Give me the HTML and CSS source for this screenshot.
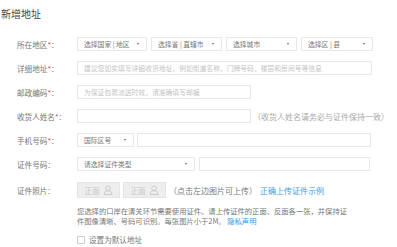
FILE: index.html
```html
<!DOCTYPE html>
<html>
	<head>
		<meta charset="utf-8">
		<link rel="stylesheet" href="styles.css">
	</head>
	<body>
		<div class="container">
			<h1>新增地址</h1>
			<form>
				<div class="row">
					<label class="label">所在地区<i>*</i>：</label>
					<div class="select w70">选择国家 | 地区<span class="arrow"></span></div>
					<div class="select w71">选择省 | 直辖市<span class="arrow"></span></div>
					<div class="select w71">选择城市<span class="arrow"></span></div>
					<div class="select w72">选择区 | 县<span class="arrow"></span></div>
				</div>
				<div class="row">
					<label class="label">详细地址<i>*</i>：</label>
					<div class="input w295 placeholder">建议您如实填写详细收货地址，例如街道名称，门牌号码，楼层和房间号等信息</div>
				</div>
				<div class="row">
					<label class="label">邮政编码<i>*</i>：</label>
					<div class="input w174 placeholder">为保证包裹派送时效，请准确填写邮编</div>
				</div>
				<div class="row">
					<label class="label">收货人姓名<i>*</i>：</label>
					<div class="input w174"></div>
					<span class="hint">（收货人姓名请务必与证件保持一致）</span>
				</div>
				<div class="row">
					<label class="label">手机号码<i>*</i>：</label>
					<div class="select w57">国际区号<span class="arrow"></span></div>
					<div class="input w234"></div>
				</div>
				<div class="row">
					<label class="label">证件号码：</label>
					<div class="select w118">请选择证件类型<span class="arrow"></span></div>
					<div class="input w171"></div>
				</div>
				<div class="row row-photo">
					<label class="label">证件照片：</label>
					<div class="photo">正面
						<svg width="10" height="10" viewBox="0 0 10 10"><circle cx="5" cy="3.2" r="2.3" fill="none" stroke="#c6c6c6" stroke-width="0.9"/><path d="M1 9.5 C1 6.8 3 5.8 5 5.8 C7 5.8 9 6.8 9 9.5 Z" fill="none" stroke="#c6c6c6" stroke-width="0.9"/></svg>
					</div>
					<div class="photo">正面
						<svg width="10" height="10" viewBox="0 0 10 10"><circle cx="5" cy="3.2" r="2.3" fill="none" stroke="#c6c6c6" stroke-width="0.9"/><path d="M1 9.5 C1 6.8 3 5.8 5 5.8 C7 5.8 9 6.8 9 9.5 Z" fill="none" stroke="#c6c6c6" stroke-width="0.9"/></svg>
					</div>
					<span class="tip">（点击左边图片可上传）</span>
					<a class="link">正确上传证件示例</a>
				</div>
				<p class="notice">您选择的口岸在清关环节需要使用证件。请上传证件的正面、反面各一张，并保持证<br>件图像清晰、号码可识别。每张图片小于2M。 <a class="link">隐私声明</a></p>
				<div class="default">
					<span class="checkbox"></span>设置为默认地址
				</div>
			</form>
		</div>
	</body>
</html>
```

FILE: styles.css
```css
body {
	margin: 0;
	background: #fff;
	font-family: "Noto Sans CJK SC", "Noto Sans", sans-serif;
	color: #777;
}
.container {
	width: 397px;
	padding-left: 1px;
}
h1 {
	margin: 7px 0 0;
	font-size: 10px;
	line-height: 14px;
	font-weight: 400;
	color: #444;
}
form {
	margin-top: 16px;
}
.row {
	display: flex;
	align-items: center;
	height: 14px;
	margin-bottom: 10px;
	padding-left: 16px;
}
.label {
	width: 60px;
	flex: none;
	font-size: 7.6px;
	color: #777;
	white-space: nowrap;
}
.label i {
	font-style: normal;
	color: #e4393c;
}
.select, .input {
	box-sizing: border-box;
	height: 14px;
	border: 1px solid #e8e8e8;
	background: #fff;
	font-size: 6.8px;
	line-height: 12px;
	color: #777;
	padding: 0 6px;
	white-space: nowrap;
	overflow: hidden;
	flex: none;
	margin-right: 4px;
}
.select {
	position: relative;
}
.arrow {
	position: absolute;
	right: 7px;
	top: 5px;
	border-left: 1.5px solid transparent;
	border-right: 1.5px solid transparent;
	border-top: 2px solid #666;
}
.placeholder {
	color: #c4c4c4;
}
.w70 { width: 70px; }
.w71 { width: 71px; }
.w72 { width: 72px; }
.w295 { width: 295px; }
.w174 { width: 174px; }
.w57 { width: 57px; margin-right: 3px; }
.w234 { width: 234px; }
.w118 { width: 118px; }
.w171 { width: 171px; }
.hint {
	font-size: 8px;
	color: #aaa;
	margin-left: -2px;
	white-space: nowrap;
}
.row-photo {
	height: 16px;
	margin-top: 11px;
	margin-bottom: 8px;
}
.photo {
	box-sizing: border-box;
	width: 43px;
	height: 16px;
	margin-right: 3px;
	background: #eee;
	border: 1px solid #e4e4e4;
	color: #c6c6c6;
	font-size: 7.6px;
	display: flex;
	align-items: center;
	justify-content: center;
	gap: 3px;
	flex: none;
}
.tip {
	font-size: 8px;
	color: #777;
	white-space: nowrap;
}
.link {
	color: #3d9ae8;
	font-size: 8px;
	white-space: nowrap;
}
.tip + .link {
	margin-left: 3px;
}
.notice {
	margin: 0 0 0 76px;
	font-size: 7.3px;
	line-height: 10px;
	color: #777;
	white-space: nowrap;
}
.notice .link {
	font-size: 7.3px;
}
.default {
	margin: 9px 0 0 76px;
	font-size: 7.6px;
	line-height: 10px;
	color: #777;
	display: flex;
	align-items: center;
}
.checkbox {
	width: 6px;
	height: 6px;
	border: 1px solid #ccc;
	border-radius: 1px;
	margin-right: 4px;
}
```
